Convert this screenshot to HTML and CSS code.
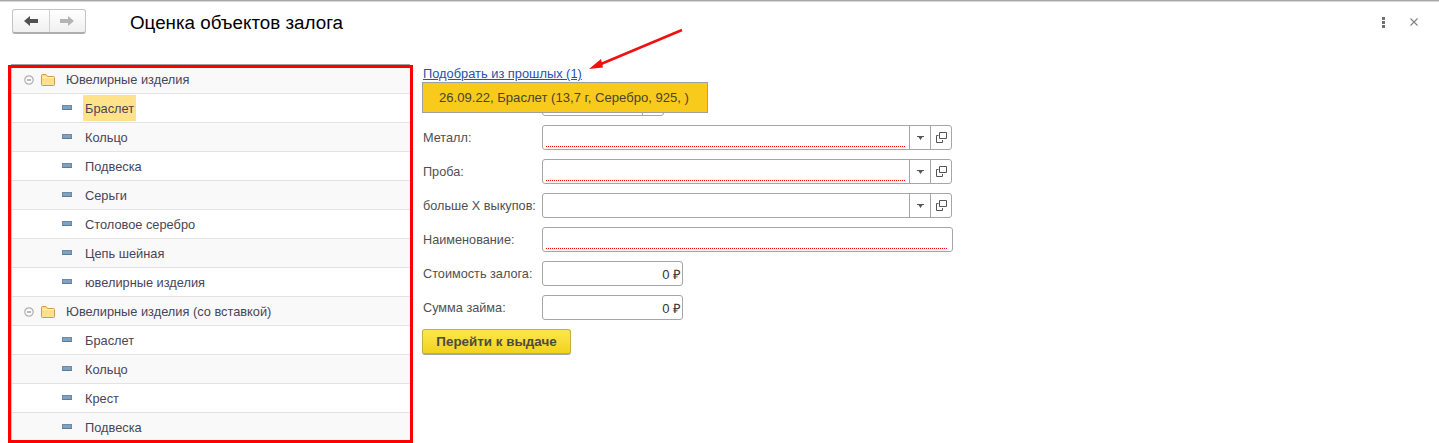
FILE: index.html
```html
<!DOCTYPE html>
<html lang="ru">
<head>
<meta charset="utf-8">
<title>Оценка объектов залога</title>
<link rel="stylesheet" href="styles.css">
</head>
<body>
<header class="head">
  <div class="nav">
    <button class="nav-btn"><svg width="14" height="10" viewBox="0 0 14 10"><path d="M0 5l6-5v3h8v4H6v3z" fill="#505050"/></svg></button>
    <button class="nav-btn"><svg width="14" height="10" viewBox="0 0 14 10"><path d="M14 5L8 0v3H0v4h8v3z" fill="#b4b4b4"/></svg></button>
  </div>
  <h1 class="title">Оценка объектов залога</h1>
  <div class="head-tools">
    <svg width="3" height="11" viewBox="0 0 3 11"><path d="M0 0h3v3H0zM0 4h3v3H0zM0 8h3v3H0z" fill="#707070"/></svg>
    <svg width="8" height="8" viewBox="0 0 8 8"><path d="M.5 .5l7 7M7.500 .5l-7 7" stroke="#808080" stroke-width="1.100" fill="none"/></svg>
  </div>
</header>
<main class="main">
  <section class="tree">
    <div class="row group"><svg class="collapse" width="10" height="10" viewBox="0 0 10 10"><circle cx="5" cy="5" r="4.200" fill="#fafafa" stroke="#b0b0b0" stroke-width="1.200"/><path d="M3 5h4" stroke="#777"/></svg><svg class="folder" width="14" height="12" viewBox="0 0 14 12"><path d="M.5 10V1.500a1 1 0 0 1 1-1h3.500l1.500 2h6a1 1 0 0 1 1 1v7a1 1 0 0 1-1 1h-11a1 1 0 0 1-1-1z" fill="#fde08e" stroke="#cf9a4a"/><path d="M1 3.500h12" stroke="#fff1c4"/></svg><span>Ювелирные изделия</span></div>
    <div class="row item"><i class="dash"></i><span class="sel">Браслет</span></div>
    <div class="row item alt"><i class="dash"></i><span>Кольцо</span></div>
    <div class="row item"><i class="dash"></i><span>Подвеска</span></div>
    <div class="row item alt"><i class="dash"></i><span>Серьги</span></div>
    <div class="row item"><i class="dash"></i><span>Столовое серебро</span></div>
    <div class="row item alt"><i class="dash"></i><span>Цепь шейная</span></div>
    <div class="row item"><i class="dash"></i><span>ювелирные изделия</span></div>
    <div class="row group"><svg class="collapse" width="10" height="10" viewBox="0 0 10 10"><circle cx="5" cy="5" r="4.200" fill="#fafafa" stroke="#b0b0b0" stroke-width="1.200"/><path d="M3 5h4" stroke="#777"/></svg><svg class="folder" width="14" height="12" viewBox="0 0 14 12"><path d="M.5 10V1.500a1 1 0 0 1 1-1h3.500l1.500 2h6a1 1 0 0 1 1 1v7a1 1 0 0 1-1 1h-11a1 1 0 0 1-1-1z" fill="#fde08e" stroke="#cf9a4a"/><path d="M1 3.500h12" stroke="#fff1c4"/></svg><span>Ювелирные изделия (со вставкой)</span></div>
    <div class="row item"><i class="dash"></i><span>Браслет</span></div>
    <div class="row item alt"><i class="dash"></i><span>Кольцо</span></div>
    <div class="row item"><i class="dash"></i><span>Крест</span></div>
    <div class="row item alt"><i class="dash"></i><span>Подвеска</span></div>
  </section>
  <section class="form">
    <a class="link" href="#">Подобрать из прошлых (1)</a>
    <div class="field"><label></label><div class="input short"><div class="value"></div><div class="btn"></div></div></div>
    <div class="popup">26.09.22, Браслет (13,7 г, Серебро, 925, )</div>
    <div class="field"><label>Металл:</label><div class="input wide"><div class="value req"></div><div class="btn"><svg width="7" height="4" viewBox="0 0 7 4"><path d="M0 0h7v1H5.500L3.500 4 1.500 1H0z" fill="#555"/></svg></div><div class="btn"><svg width="11" height="11" viewBox="0 0 11 11"><path d="M3.500 .5h7v6h-7zM.5 3.500h2M.5 3.500v7h6V8" fill="none" stroke="#555"/></svg></div></div></div>
    <div class="field"><label>Проба:</label><div class="input wide"><div class="value req"></div><div class="btn"><svg width="7" height="4" viewBox="0 0 7 4"><path d="M0 0h7v1H5.500L3.500 4 1.500 1H0z" fill="#555"/></svg></div><div class="btn"><svg width="11" height="11" viewBox="0 0 11 11"><path d="M3.500 .5h7v6h-7zM.5 3.500h2M.5 3.500v7h6V8" fill="none" stroke="#555"/></svg></div></div></div>
    <div class="field"><label>больше Х выкупов:</label><div class="input wide"><div class="value"></div><div class="btn"><svg width="7" height="4" viewBox="0 0 7 4"><path d="M0 0h7v1H5.500L3.500 4 1.500 1H0z" fill="#555"/></svg></div><div class="btn"><svg width="11" height="11" viewBox="0 0 11 11"><path d="M3.500 .5h7v6h-7zM.5 3.500h2M.5 3.500v7h6V8" fill="none" stroke="#555"/></svg></div></div></div>
    <div class="field"><label>Наименование:</label><div class="input full"><div class="value req"></div></div></div>
    <div class="field"><label>Стоимость залога:</label><div class="input money">0 ₽</div></div>
    <div class="field"><label>Сумма займа:</label><div class="input money">0 ₽</div></div>
    <button class="go">Перейти к выдаче</button>
  </section>
</main>
<svg class="arrow" width="100" height="45" viewBox="0 0 100 45"><path d="M93 3L12 37" stroke="#f01010" stroke-width="2.500" fill="none"/><path d="M0 42L12 32l2 8.500z" fill="#f01010"/></svg>
</body>
</html>
```
FILE: styles.css
```css
* { box-sizing: border-box; }
html, body { margin: 0; height: 443px; overflow: hidden; }
body {
  position: relative;
  background: #fff;
  border-top: 1px solid #a8a8a8;
  font-family: "Liberation Sans", Arial, sans-serif;
  font-size: 12px;
  color: #4b4b4b;
}
.head { display: flex; align-items: center; height: 64px; padding: 0 21px 24px 12px; box-shadow: inset 0 1px 0 #d8d8d8; }
.nav {
  display: flex; width: 74px; height: 25px;
  border: 1px solid #c4c4c4; border-bottom: 2px solid #aeaeae; border-radius: 3px;
  background: linear-gradient(#fff, #f0f0f0);
}
.nav-btn {
  flex: 1; display: flex; align-items: center; justify-content: center;
  border: 0; padding: 0; background: none;
}
.nav-btn + .nav-btn { border-left: 1px solid #d0d0d0; }
.title { margin: 4px 0 0 44px; font-size: 18.800px; font-weight: 400; color: #000; flex: 1; }
.head-tools { display: flex; align-items: center; gap: 25px; margin-top: 2px; }
.main { display: flex; align-items: flex-start; }
.tree {
  width: 405px; height: 378px; margin-left: 8px; flex: none;
  border: 3px solid #f00; overflow: hidden;
  padding-left: 1px;
  box-shadow: inset 1px 0 0 #c8c8c8, 0 -4px 0 -3px #a0a0a0;
}
.row {
  display: flex; align-items: center; height: 29px; flex: none;
  border-bottom: 1px solid #e3e3e3;
  color: #4a4458; font-size: 12.800px; background: #fff;
}
.row:first-child { height: 26px; padding-bottom: 3px; }
.group, .alt { background: #f9f9f9; }
.group { padding-left: 12px; padding-top: 1px; }
.collapse { margin-right: 7px; }
.folder { margin-right: 11px; }
.item { padding-left: 50px; }
.dash {
  display: block; width: 10px; height: 5px; margin: -2px 11px 0 0;
  background: #7fa2c0; border: 1px solid #6b8aa8; border-bottom-color: #5a7a9a;
}
.item span { padding: 0 2px; height: 26px; line-height: 28px; }
.sel { background: #ffe28a; }
.form { position: relative; display: flex; flex-direction: column; padding: 0 0 0 9px; flex: none; width: 560px; }
.link { color: #2a4fb0; font-size: 12.850px; text-decoration: underline; height: 26px; line-height: 18px; white-space: nowrap; padding-left: 1px; }
.popup {
  position: absolute; left: 9px; top: 17px; width: 286px; height: 31px;
  background: #f8ca1c; border: 1px solid #a0a0a0; color: #4a4232;
  font-size: 13.100px; line-height: 29px; padding-left: 16px;
}
.field { display: flex; align-items: center; height: 25px; margin-bottom: 9px; }
.field label { width: 120px; flex: none; padding-left: 1px; font-size: 12.700px; color: #505050; white-space: nowrap; }
.input {
  display: flex; align-items: stretch; height: 25px;
  border: 1px solid #a6a6a6; border-radius: 3px; background: #fff;
}
.short { width: 122px; }
.wide { width: 410px; }
.full { width: 411px; }
.money { width: 141px; justify-content: flex-end; align-items: center; padding-right: 1px; color: #333; font-size: 13px; }
.value { flex: 1; position: relative; }
.req::after {
  content: ""; position: absolute; left: 3px; right: 4px; bottom: 2px; height: 1px;
  background: repeating-linear-gradient(90deg, #f00 0 1px, transparent 1px 2px);
}
.btn { width: 21px; flex: none; display: flex; align-items: center; justify-content: center; border-left: 1px solid #a6a6a6; }
.go {
  align-self: flex-start; width: 149px; height: 26px; padding: 0;
  border: 1px solid #c8b040; border-bottom: 2px solid #a8a8a8; border-radius: 3px;
  background: linear-gradient(#fbe74e, #f3d21e);
  font: 700 13.400px "Liberation Sans", Arial, sans-serif; color: #4c4c40;
}
.arrow { position: absolute; left: 589px; top: 26px; }
```
